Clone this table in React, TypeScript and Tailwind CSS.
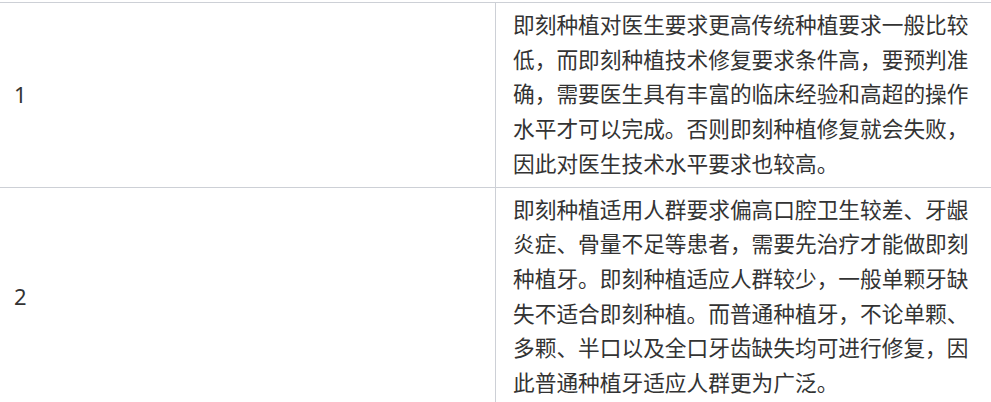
const rows = [
  {
    no: "1",
    text: "即刻种植对医生要求更高传统种植要求一般比较低，而即刻种植技术修复要求条件高，要预判准确，需要医生具有丰富的临床经验和高超的操作水平才可以完成。否则即刻种植修复就会失败，因此对医生技术水平要求也较高。",
  },
  {
    no: "2",
    text: "即刻种植适用人群要求偏高口腔卫生较差、牙龈炎症、骨量不足等患者，需要先治疗才能做即刻种植牙。即刻种植适应人群较少，一般单颗牙缺失不适合即刻种植。而普通种植牙，不论单颗、多颗、半口以及全口牙齿缺失均可进行修复，因此普通种植牙适应人群更为广泛。",
  },
];

export default function App() {
  return (
    <main
      className="min-h-screen bg-white pt-[2px] text-[#333]"
      style={{ fontFamily: '"Noto Sans", "Noto Sans CJK SC", sans-serif' }}
    >
      <div className="border-b border-[#cdd0d6]">
        {rows.map((row) => (
          <div
            key={row.no}
            className="grid grid-cols-[495px_1fr] border-t border-[#cdd0d6]"
          >
            {/* Number */}
            <div className="flex items-center pl-[14px] text-[22px]">
              {row.no}
            </div>

            {/* Content */}
            <div className="border-l border-[#cdd0d6] py-[5px] pl-[17px] pr-[10px] text-[21.7px] leading-[34.7px]">
              {row.text}
            </div>
          </div>
        ))}
      </div>
    </main>
  );
}
